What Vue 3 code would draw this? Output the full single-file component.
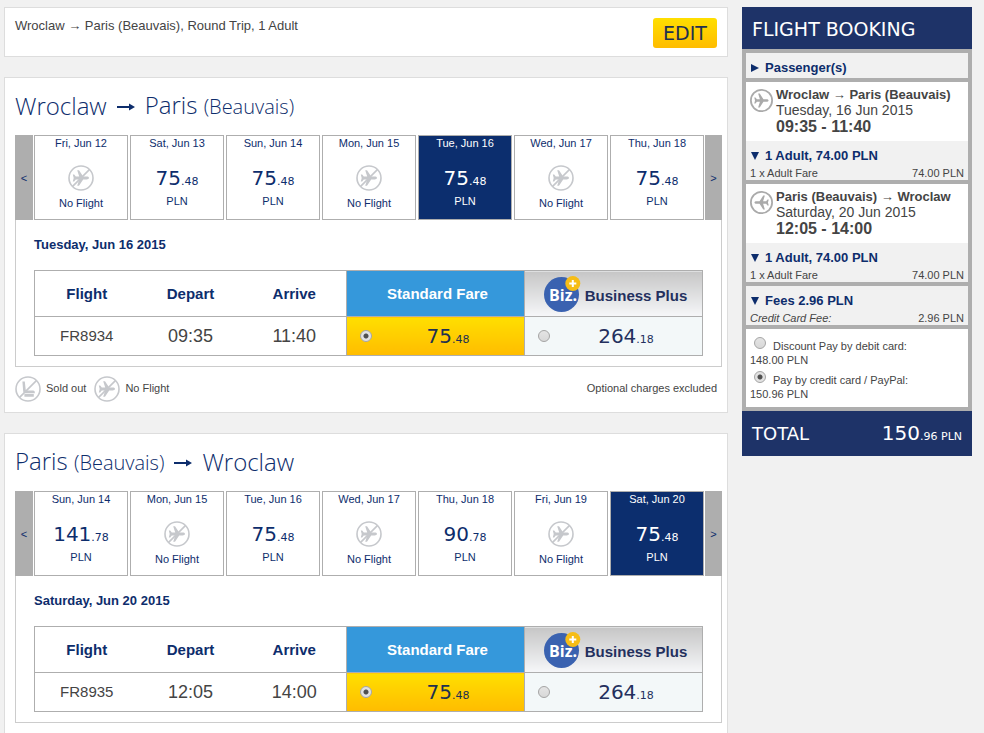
<script setup>
import { ref } from 'vue'

const none = { none: true }
const price = (whole, cents) => ({ whole, cents })

const trips = ref([
  {
    id: 'out',
    from: { city: 'Wroclaw' },
    to: { city: 'Paris', airport: '(Beauvais)' },
    days: [
      { label: 'Fri, Jun 12', ...none },
      { label: 'Sat, Jun 13', ...price('75', '48') },
      { label: 'Sun, Jun 14', ...price('75', '48') },
      { label: 'Mon, Jun 15', ...none },
      { label: 'Tue, Jun 16', ...price('75', '48') },
      { label: 'Wed, Jun 17', ...none },
      { label: 'Thu, Jun 18', ...price('75', '48') }
    ],
    selected: 4,
    date: 'Tuesday, Jun 16 2015',
    flight: 'FR8934',
    depart: '09:35',
    arrive: '11:40',
    fare: 'standard',
    legend: true
  },
  {
    id: 'back',
    from: { city: 'Paris', airport: '(Beauvais)' },
    to: { city: 'Wroclaw' },
    days: [
      { label: 'Sun, Jun 14', ...price('141', '78') },
      { label: 'Mon, Jun 15', ...none },
      { label: 'Tue, Jun 16', ...price('75', '48') },
      { label: 'Wed, Jun 17', ...none },
      { label: 'Thu, Jun 18', ...price('90', '78') },
      { label: 'Fri, Jun 19', ...none },
      { label: 'Sat, Jun 20', ...price('75', '48') }
    ],
    selected: 6,
    date: 'Saturday, Jun 20 2015',
    flight: 'FR8935',
    depart: '12:05',
    arrive: '14:00',
    fare: 'standard',
    legend: false
  }
])

const legs = [
  { route: 'Wroclaw → Paris (Beauvais)', date: 'Tuesday, 16 Jun 2015', time: '09:35 - 11:40', back: false },
  { route: 'Paris (Beauvais) → Wroclaw', date: 'Saturday, 20 Jun 2015', time: '12:05 - 14:00', back: true }
]

const payment = ref('credit')
const plane =
  'M21 13c0-.9-1.2-1.4-2.4-1.4h-3.4L11 5.2H9.2l2 6.4H7.8L6.2 9.6H4.8l.9 3.4-.9 3.4h1.4l1.6-2h3.4l-2 6.4H11l4.2-6.4h3.4c1.2 0 2.4-.5 2.4-1.4z'
</script>

<template>
  <div class="page">
    <main class="main">
      <section class="card summary">
        <p>Wroclaw → Paris (Beauvais), Round Trip, 1 Adult</p>
        <button type="button" class="edit">EDIT</button>
      </section>

      <section v-for="trip in trips" :key="trip.id" class="card trip" :class="{ open: !trip.legend }">
        <h2>
          <span>{{ trip.from.city }} <small v-if="trip.from.airport">{{ trip.from.airport }}</small></span>
          <svg class="arrow" viewBox="0 0 18 8" aria-hidden="true">
            <path d="M0 3h12V0.5L18 4l-6 3.5V5H0z" />
          </svg>
          <span>{{ trip.to.city }} <small v-if="trip.to.airport">{{ trip.to.airport }}</small></span>
        </h2>

        <div class="panel">
          <div class="strip">
            <button type="button" class="step">&lt;</button>
            <div class="days">
              <button
                v-for="(day, i) in trip.days"
                :key="day.label"
                type="button"
                class="day"
                :class="{ active: i === trip.selected }"
                @click="trip.selected = i"
              >
                <span>{{ day.label }}</span>
                <template v-if="day.none">
                  <svg class="status" viewBox="0 0 26 26" aria-hidden="true">
                    <circle cx="13" cy="13" r="12" />
                    <path class="fill" :d="plane" />
                    <path d="M4.6 21.4L21.4 4.6" />
                  </svg>
                  <span>No Flight</span>
                </template>
                <template v-else>
                  <span class="price">{{ day.whole }}<small>.{{ day.cents }}</small></span>
                  <span>PLN</span>
                </template>
              </button>
            </div>
            <button type="button" class="step next">&gt;</button>
          </div>

          <h3>{{ trip.date }}</h3>

          <table>
            <colgroup>
              <col class="narrow" /><col class="narrow" /><col class="narrow" /><col /><col />
            </colgroup>
            <thead>
              <tr>
                <th>Flight</th>
                <th>Depart</th>
                <th>Arrive</th>
                <th class="std">Standard Fare</th>
                <th class="biz">
                  <div class="bizhead">
                    <svg class="bizlogo" viewBox="0 0 37 36" aria-hidden="true">
                      <circle cx="17.5" cy="18.5" r="17.5" fill="#3a62b0" />
                      <text x="5" y="25" class="logotext">Biz.</text>
                      <circle cx="28.8" cy="7.5" r="7.5" fill="#f6bd16" />
                      <path d="M28.8 4v7M25.3 7.5h7" stroke="#fff" stroke-width="2" />
                    </svg>
                    <span>Business Plus</span>
                  </div>
                </th>
              </tr>
            </thead>
            <tbody>
              <tr>
                <td class="code">{{ trip.flight }}</td>
                <td>{{ trip.depart }}</td>
                <td>{{ trip.arrive }}</td>
                <td class="std">
                  <label class="fare">
                    <input v-model="trip.fare" type="radio" :name="'fare-' + trip.id" value="standard" />
                    <span class="price">75<small>.48</small></span>
                  </label>
                </td>
                <td class="biz">
                  <label class="fare">
                    <input v-model="trip.fare" type="radio" :name="'fare-' + trip.id" value="business" />
                    <span class="price">264<small>.18</small></span>
                  </label>
                </td>
              </tr>
            </tbody>
          </table>
        </div>

        <div v-if="trip.legend" class="legend">
          <svg class="status" viewBox="0 0 26 26" aria-hidden="true">
            <circle cx="13" cy="13" r="12" />
            <path class="fill" d="M7.4 5.6h2.4l1 8.8h7.4q1.6 0 1.6 1.6v1.2H10q-1.6 0-1.8-1.6zM9.4 18h9.4v2.8H9.4z" />
            <path d="M4.6 21.4L21.4 4.6" />
          </svg>
          <span>Sold out</span>
          <svg class="status" viewBox="0 0 26 26" aria-hidden="true">
            <circle cx="13" cy="13" r="12" />
            <path class="fill" :d="plane" />
            <path d="M4.6 21.4L21.4 4.6" />
          </svg>
          <span>No Flight</span>
          <span class="note">Optional charges excluded</span>
        </div>
      </section>
    </main>

    <aside class="booking">
      <h1>FLIGHT BOOKING</h1>
      <div class="boxes">
        <button type="button" class="toggle passengers">
          <svg viewBox="0 0 8 8" aria-hidden="true"><path d="M0 0l8 4-8 4z" /></svg>
          Passenger(s)
        </button>

        <section v-for="leg in legs" :key="leg.time">
          <div class="leg">
            <svg class="legicon" :class="{ flip: leg.back }" viewBox="0 0 26 26" aria-hidden="true">
              <circle cx="13" cy="13" r="12" />
              <path :d="plane" />
            </svg>
            <div>
              <strong>{{ leg.route }}</strong>
              <p>{{ leg.date }}</p>
              <strong class="time">{{ leg.time }}</strong>
            </div>
          </div>
          <div class="cost">
            <button type="button" class="toggle">
              <svg viewBox="0 0 8 8" aria-hidden="true"><path d="M0 0h8l-4 8z" /></svg>
              1 Adult, 74.00 PLN
            </button>
            <p class="line"><span>1 x Adult Fare</span><span>74.00 PLN</span></p>
          </div>
        </section>

        <section class="cost">
          <button type="button" class="toggle">
            <svg viewBox="0 0 8 8" aria-hidden="true"><path d="M0 0h8l-4 8z" /></svg>
            Fees 2.96 PLN
          </button>
          <p class="line"><em>Credit Card Fee:</em><span>2.96 PLN</span></p>
        </section>

        <section class="pay">
          <label>
            <span class="option">
              <input v-model="payment" type="radio" name="payment" value="debit" />
              Discount Pay by debit card:
            </span>
            148.00 PLN
          </label>
          <label>
            <span class="option">
              <input v-model="payment" type="radio" name="payment" value="credit" />
              Pay by credit card / PayPal:
            </span>
            150.96 PLN
          </label>
        </section>
      </div>
      <div class="total">
        <span>TOTAL</span>
        <span class="price">150<small>.96 PLN</small></span>
      </div>
    </aside>
  </div>
</template>

<style>
body {
  background: #f1f1f1;
}
</style>

<style scoped>
.page {
  display: flex;
  align-items: flex-start;
  gap: 14px;
  padding: 7px 12px 0 4px;
  font: 13px/16px "Liberation Sans", Arial, sans-serif;
  color: #444;
}
.page * {
  box-sizing: border-box;
}
p, h1, h2, h3 {
  margin: 0;
}
button {
  font: inherit;
  color: inherit;
  border: 0;
  padding: 0;
  cursor: pointer;
}
.main {
  flex: 1;
  min-width: 0;
  display: flex;
  flex-direction: column;
  gap: 20px;
}
.card {
  background: #fff;
  border: 1px solid #ddd;
}
.summary {
  display: flex;
  justify-content: space-between;
  align-items: flex-start;
  padding: 10px 10px 8px;
}
.edit {
  width: 64px;
  height: 30px;
  border-radius: 3px;
  background: linear-gradient(#ffdf00, #ffbc00);
  color: #1e3050;
  font: 19px/30px "DejaVu Sans", Verdana, sans-serif;
}
.trip {
  padding: 10px 5px 10px 10px;
}
.open {
  border-bottom: 0;
}
h2 {
  display: flex;
  align-items: center;
  gap: 10px;
  height: 36px;
  margin-bottom: 11px;
  font: 300 24px/36px "Open Sans", sans-serif;
  color: #0d2d6c;
}
h2 small {
  font-size: 20px;
}
.arrow {
  width: 18px;
  height: 8px;
  margin-top: 2px;
  fill: #0d2d6c;
}
.panel {
  border: 1px solid #ccc;
  border-top: 0;
  padding-bottom: 10px;
}
.strip {
  display: flex;
  gap: 1px;
  height: 85px;
  margin: 0 -1px;
}
.step {
  width: 18px;
  background: #aeaeae;
  color: #0d2d6c;
  font-size: 11px;
}
.next {
  width: 17px;
}
.days {
  flex: 1;
  display: flex;
  gap: 2px;
}
.day {
  flex: 1 1 0;
  min-width: 0;
  display: flex;
  flex-direction: column;
  align-items: center;
  border: 1px solid #aeaeae;
  background: #fff;
  color: #0d2d6c;
  font-size: 11px;
  line-height: 14px;
}
.day .price {
  margin: 16px 0 0;
}
.day .status {
  margin: 15px 0 5px;
}
.active {
  background: #0c2e6e;
  color: #fff;
}
.price {
  font: 20px/24px "DejaVu Sans", Verdana, sans-serif;
}
.price small {
  font-size: 11px;
}
.status {
  width: 26px;
  height: 26px;
  fill: none;
  stroke: #c6c8cc;
  stroke-width: 1.6;
}
.status .fill {
  fill: #c6c8cc;
  stroke: none;
}
h3 {
  margin: 17px 18px;
  font-size: 13px;
  line-height: 16px;
  color: #0d2d6c;
}
table {
  width: calc(100% - 36px);
  margin: 0 18px;
  border-collapse: collapse;
  table-layout: fixed;
  border: 1px solid #aeaeae;
}
.narrow {
  width: 104px;
}
th, td {
  padding: 0;
  text-align: center;
  vertical-align: middle;
}
th {
  height: 46px;
  font-size: 15px;
  color: #0d2d6c;
  border-bottom: 1px solid #aeaeae;
}
td {
  height: 39px;
  font-size: 18px;
}
.code {
  font-size: 15px;
}
.std, .biz {
  border-left: 1px solid #aeaeae;
}
th.std {
  padding-left: 4px;
  background: #3598db;
  color: #fff;
}
td.std {
  background: linear-gradient(#ffdf00, #ffbc00);
  color: #1e3050;
}
th.biz {
  padding-left: 4px;
  background: linear-gradient(#c6c6c6, #f6f7f9);
  color: #24305e;
}
td.biz {
  background: #f3f8f9;
  color: #24305e;
}
.bizhead {
  display: flex;
  justify-content: center;
  align-items: center;
  gap: 4px;
}
.bizhead span {
  padding-top: 4px;
}
.bizlogo {
  width: 37px;
  height: 36px;
}
.logotext {
  font: 700 16px "Open Sans", sans-serif;
  fill: #fff;
}
.fare {
  display: flex;
  align-items: center;
  padding: 0 0 0 13px;
}
.fare .price {
  flex: 1;
  padding-top: 3px;
}
input[type="radio"] {
  appearance: none;
  flex: none;
  width: 12px;
  height: 12px;
  margin: 0;
  border: 1px solid #a5a5a5;
  border-radius: 50%;
  background: linear-gradient(#e4e4e4, #d8d8d8);
}
input[type="radio"]:checked {
  background: radial-gradient(circle, #505050 0 2px, #e2e2e2 3px);
}
.legend {
  display: flex;
  align-items: center;
  gap: 5px;
  padding: 9px 5px 0 0;
  font-size: 11px;
}
.legend span {
  padding-bottom: 2px;
}
.legend .status ~ .status {
  margin-left: 3px;
}
.note {
  margin-left: auto;
}
.booking {
  flex: 0 0 230px;
}
h1 {
  padding: 11px 10px 9px;
  background: #1e3368;
  color: #fff;
  font: 19px/22px "DejaVu Sans", Verdana, sans-serif;
}
.boxes {
  display: flex;
  flex-direction: column;
  gap: 4px;
  padding: 4px;
  background: #aeaeae;
}
.toggle {
  display: flex;
  align-items: center;
  gap: 6px;
  width: 100%;
  padding: 0 5px;
  background: none;
  color: #0d2d6c;
  font-weight: bold;
}
.toggle svg {
  width: 8px;
  height: 8px;
  fill: #0d2d6c;
}
.toggle.passengers {
  padding: 7px 5px 2px;
  background: #f1f1f1;
}
.leg {
  display: flex;
  gap: 3px;
  height: 59px;
  padding: 5px 4px;
  background: #fff;
}
.legicon {
  width: 23px;
  height: 23px;
  margin-top: 2px;
  fill: #aaa;
}
.legicon circle {
  fill: none;
  stroke: #aaa;
  stroke-width: 2;
}
.flip {
  transform: scaleX(-1);
}
.leg strong, .leg p {
  display: block;
}
.leg p {
  font-size: 14px;
  line-height: 15px;
}
.leg .time {
  font-size: 16px;
  line-height: 18px;
}
.cost {
  padding: 7px 0 1px;
  background: #f1f1f1;
}
.line {
  display: flex;
  justify-content: space-between;
  padding: 3px 4px 0;
  font-size: 11px;
  line-height: 12px;
}
.pay {
  display: flex;
  flex-direction: column;
  gap: 4px;
  padding: 8px 4px 6px;
  background: #fff;
  font-size: 11px;
  line-height: 14px;
}
.pay label {
  display: block;
}
.option {
  display: flex;
  align-items: flex-end;
  gap: 7px;
  height: 16px;
  padding-left: 4px;
}
.option input {
  align-self: flex-start;
}
.total {
  display: flex;
  justify-content: space-between;
  align-items: center;
  height: 45px;
  padding: 0 10px;
  background: #1e3368;
  color: #fff;
  font: 18px/24px "DejaVu Sans", Verdana, sans-serif;
}
.total .price {
  padding-top: 3px;
}
</style>
